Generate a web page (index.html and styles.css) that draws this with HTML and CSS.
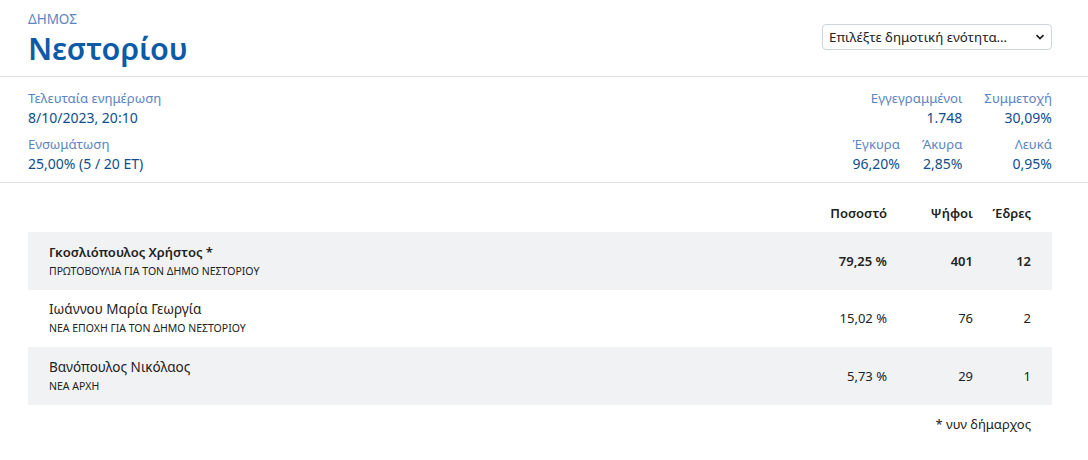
FILE: index.html
```html
<!DOCTYPE html>
<html lang="el">
<head>
<meta charset="utf-8">
<link rel="stylesheet" href="styles.css">
</head>
<body>
<header class="head">
  <div class="head-title">
    <div class="kicker">ΔΗΜΟΣ</div>
    <h1 class="title">Νεστορίου</h1>
  </div>
  <div class="select">
    <span>Επιλέξτε δημοτική ενότητα...</span>
    <svg class="chev" width="10" height="6" viewBox="0 0 10 6"><path d="M1.5 1.2 L5 4.6 L8.5 1.2" fill="none" stroke="#222" stroke-width="1.8"/></svg>
  </div>
</header>
<section class="stats">
  <div class="stats-left">
    <div class="stat">
      <div class="lbl">Τελευταία ενημέρωση</div>
      <div class="val">8/10/2023, 20:10</div>
    </div>
    <div class="stat">
      <div class="lbl">Ενσωμάτωση</div>
      <div class="val">25,00% (5 / 20 ΕΤ)</div>
    </div>
  </div>
  <div class="stats-right">
    <div class="stat span2">
      <div class="lbl">Εγγεγραμμένοι</div>
      <div class="val">1.748</div>
    </div>
    <div class="stat">
      <div class="lbl">Συμμετοχή</div>
      <div class="val">30,09%</div>
    </div>
    <div class="stat">
      <div class="lbl">Έγκυρα</div>
      <div class="val">96,20%</div>
    </div>
    <div class="stat">
      <div class="lbl">Άκυρα</div>
      <div class="val">2,85%</div>
    </div>
    <div class="stat">
      <div class="lbl">Λευκά</div>
      <div class="val">0,95%</div>
    </div>
  </div>
</section>
<section class="results">
  <div class="row hdr">
    <div class="name"></div>
    <div class="pct">Ποσοστό</div>
    <div class="votes">Ψήφοι</div>
    <div class="seats">Έδρες</div>
  </div>
  <div class="row alt strong">
    <div class="name"><div class="cand">Γκοσλιόπουλος Χρήστος *</div><div class="party">ΠΡΩΤΟΒΟΥΛΙΑ ΓΙΑ ΤΟΝ ΔΗΜΟ ΝΕΣΤΟΡΙΟΥ</div></div>
    <div class="pct">79,25 %</div>
    <div class="votes">401</div>
    <div class="seats">12</div>
  </div>
  <div class="row">
    <div class="name"><div class="cand">Ιωάννου Μαρία Γεωργία</div><div class="party">ΝΕΑ ΕΠΟΧΗ ΓΙΑ ΤΟΝ ΔΗΜΟ ΝΕΣΤΟΡΙΟΥ</div></div>
    <div class="pct">15,02 %</div>
    <div class="votes">76</div>
    <div class="seats">2</div>
  </div>
  <div class="row alt">
    <div class="name"><div class="cand">Βανόπουλος Νικόλαος</div><div class="party">ΝΕΑ ΑΡΧΗ</div></div>
    <div class="pct">5,73 %</div>
    <div class="votes">29</div>
    <div class="seats">1</div>
  </div>
  <div class="note">* νυν δήμαρχος</div>
</section>
</body>
</html>
```

FILE: styles.css
```css
* { box-sizing: border-box; }
body {
  margin: 0;
  background: #fff;
  font-family: "Noto Sans", "Open Sans", sans-serif;
  color: #222;
  font-size: 13px;
}
.head {
  display: flex;
  justify-content: space-between;
  align-items: center;
  padding: 11px 36px 10px 28px;
  border-bottom: 1px solid #dfe1e4;
}
.kicker {
  color: #5b85c0;
  font-size: 13.5px;
  line-height: 16px;
}
.title {
  margin: 3px 0 0;
  color: #0d5aa7;
  font-size: 30.5px;
  font-weight: 600;
  line-height: 36px;
}
.select {
  display: flex;
  align-items: center;
  justify-content: space-between;
  width: 230px;
  height: 26px;
  margin-top: -4px;
  padding: 0 6px 0 6px;
  border: 1px solid #ced4da;
  border-radius: 4px;
  font-size: 13.3px;
  color: #222;
}
.stats {
  display: flex;
  justify-content: space-between;
  padding: 11px 36px 8px 28px;
  border-bottom: 1px solid #dfe1e4;
}
.stats-left { display: flex; flex-direction: column; gap: 6px; }
.stats-right {
  display: grid;
  grid-template-columns: auto auto auto;
  column-gap: 0;
  row-gap: 6px;
  text-align: right;
}
.stats-right .stat:nth-child(2) { padding-left: 22px; }
.stats-right .stat:nth-child(4) { padding-left: 22px; }
.stats-right .stat:nth-child(5) { padding-left: 22px; }
.span2 { grid-column: span 2; }
.lbl { color: #5b85c0; font-size: 13.2px; line-height: 20px; }
.val { color: #0f4d8c; font-size: 14px; line-height: 20px; }
.results {
  padding: 17px 36px 0 28px;
}
.row {
  display: flex;
  align-items: center;
  min-height: 57.5px;
}
.row.hdr {
  min-height: 0;
  height: 32px;
  font-weight: 600;
  align-items: flex-start;
  padding-top: 4px;
}
.row.alt { background: #f1f2f4; }
.name { flex: 1; padding-left: 21px; }
.cand { font-size: 13.5px; line-height: 20px; }
.party { font-size: 10.5px; line-height: 18px; }
.strong .cand { font-weight: 600; font-size: 13px; }
.strong .pct, .strong .votes, .strong .seats { font-weight: 600; }
.pct { width: 120px; text-align: right; }
.votes { width: 86px; text-align: right; }
.seats { width: 58px; text-align: right; margin-right: 21px; }
.note {
  text-align: right;
  padding-right: 21px;
  padding-top: 9px;
  line-height: 20px;
}
```
